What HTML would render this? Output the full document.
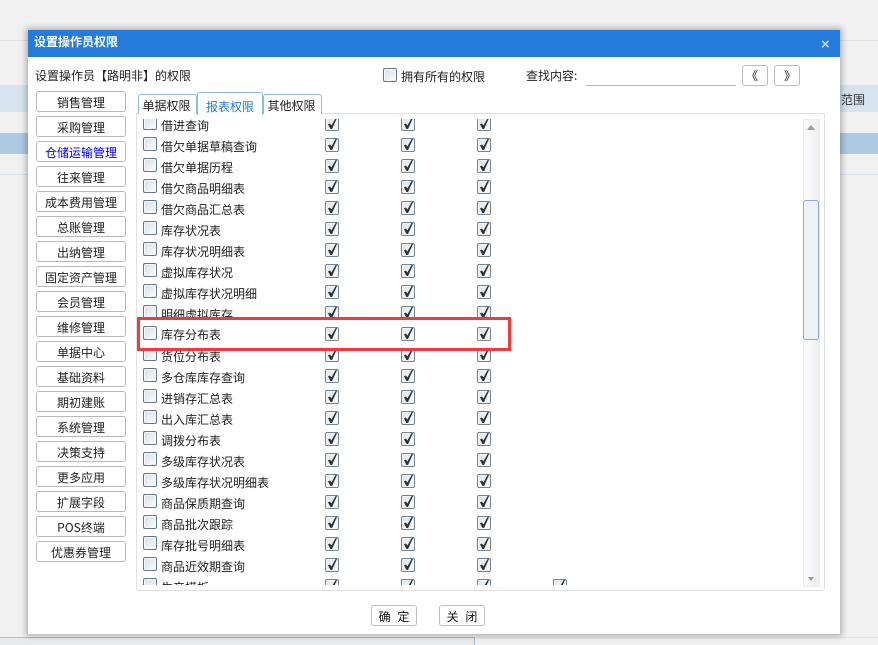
<!DOCTYPE html>
<html lang="zh">
<head>
<meta charset="utf-8">
<style>
html,body{margin:0;padding:0}
body{width:878px;height:645px;overflow:hidden;position:relative;background:#f1f1f1;font:12px/16px "WenQuanYi Zen Hei","Noto Sans CJK SC",sans-serif;color:#222}
.a{position:absolute}
#dlg{left:28px;top:30px;width:812px;height:604px;background:#fff;box-shadow:0 0 6px 2px rgba(0,0,0,.28)}
#hd{left:28px;top:30px;width:812px;height:27px;background:#247bdc;color:#fff;font-weight:bold;line-height:23px;text-indent:6px}
.b{position:absolute;left:36px;width:88px;height:19px;border:1px solid #b9b9b9;border-radius:3px;background:#fff;text-align:center;line-height:21px;white-space:nowrap}
.tab{position:absolute;border:1px solid #8fbcd4;border-bottom:0;border-radius:3px 3px 0 0;background:#fff;text-align:center;box-sizing:border-box;line-height:21px}
#panel{left:136px;top:113px;width:687px;height:476px;border:1px solid #e0e0e0;border-radius:0 0 3px 3px;background:#fff}
#list{left:136px;top:119px;width:660px;height:466px;overflow:hidden}
.r{position:absolute;left:0;width:660px;height:21px}
.r span{position:absolute;left:25px;top:0;line-height:18px;white-space:nowrap}
.c{position:absolute;left:7px;top:-1px;width:12px;height:12px;border:1px solid #64788a;border-radius:2px;background:linear-gradient(135deg,#d5dfea,#fdfdfe);box-shadow:inset 0 0 0 1px #f6f8fa;padding:0}
.k{position:absolute;top:0;width:12px;height:12px;border:1px solid #74838f;border-radius:2px;background:linear-gradient(135deg,#dfe4e9,#fbfbfc);box-shadow:inset 0 0 0 1px #f4f5f6}
.k::after{content:"";position:absolute;left:2px;top:0;width:9px;height:11px;background:#2f3033;clip-path:polygon(0 58%,22% 50%,38% 68%,85% 0,100% 0,45% 100%,28% 100%)}
.k1{left:189px}.k2{left:265px}.k3{left:341px}.k4{left:417px}
#hl{left:137px;top:317px;width:368px;height:28px;border:3px solid #f23a3a;background:#fff}
#hl .c{left:3px;top:6px}
#hl .k{top:7px}
#hl .k1{left:185px}#hl .k2{left:261px}#hl .k3{left:337px}
#hl span{position:absolute;left:21px;top:6px;line-height:18px}
#sb{left:803px;top:119px;width:15px;height:466px;border:1px solid #ededed;background:linear-gradient(90deg,#fbfbfc,#eeeff1)}
#th{left:803px;top:200px;width:14px;height:138px;border:1px solid #8fa8dc;border-radius:3px;background:#eff2f5}
.tu{width:0;height:0;border-left:4px solid transparent;border-right:4px solid transparent;border-bottom:5px solid #9a9a9a}
.td{width:0;height:0;border-left:3px solid transparent;border-right:3px solid transparent;border-top:4px solid #9a9a9a}
.s{position:absolute;width:24px;height:19px;border:1px solid #bdbdbd;border-radius:3px;background:#fff;text-align:center;line-height:20px;color:#111}
.f{position:absolute;height:19px;border:1px solid #bdbdbd;border-radius:3px;background:#fff;text-align:center;line-height:21px;color:#111;word-spacing:4px}
</style>
</head>
<body>
<div class="a" style="left:0;top:40px;width:28px;height:1px;background:#dfdfdf"></div>
<div class="a" style="left:840px;top:40px;width:38px;height:1px;background:#dfdfdf"></div>
<div class="a" style="left:0;top:85px;width:878px;height:27px;background:#d7e4ef"></div>
<div class="a" style="left:0;top:133px;width:878px;height:21px;background:#adc9e3"></div>
<div class="a" style="left:0;top:174px;width:878px;height:1px;background:#d7e4f2"></div>
<div class="a" style="left:840px;top:92px;line-height:16px;color:#333;white-space:nowrap;width:38px;overflow:hidden"><span style="margin-left:1px">范围</span></div>
<div class="a" style="left:0;top:637px;width:475px;height:8px;background:#e8eaec;border-top:1px solid #a9bcd8;border-right:1px solid #a9bcd8;box-sizing:border-box"></div>
<div class="a" style="left:475px;top:637px;width:403px;height:1px;background:#e4e4e4"></div>

<div class="a" id="dlg"></div>
<div class="a" id="hd">设置操作员权限</div>
<div class="a" style="left:821px;top:38px;color:#c6d4e6;font-size:15px;font-weight:bold;line-height:14px;font-family:'Liberation Sans',sans-serif">×</div>

<div class="a" style="left:35px;top:68px;white-space:nowrap">设置操作员【路明非】的权限</div>
<div class="a c" style="left:383px;top:68px"></div>
<div class="a" style="left:401px;top:69px;white-space:nowrap">拥有所有的权限</div>
<div class="a" style="left:526px;top:68px;white-space:nowrap">查找内容:</div>
<div class="a" style="left:586px;top:85px;width:150px;height:1px;background:#b5b5b5"></div>
<div class="s" style="left:742px;top:65px;text-indent:-6px">《</div>
<div class="s" style="left:774px;top:65px;text-indent:6px">》</div>

<div class="b" style="top:91px">销售管理</div>
<div class="b" style="top:116px">采购管理</div>
<div class="b" style="top:141px;color:#0000ee">仓储运输管理</div>
<div class="b" style="top:166px">往来管理</div>
<div class="b" style="top:191px">成本费用管理</div>
<div class="b" style="top:216px">总账管理</div>
<div class="b" style="top:241px">出纳管理</div>
<div class="b" style="top:266px">固定资产管理</div>
<div class="b" style="top:291px">会员管理</div>
<div class="b" style="top:316px">维修管理</div>
<div class="b" style="top:341px">单据中心</div>
<div class="b" style="top:366px">基础资料</div>
<div class="b" style="top:391px">期初建账</div>
<div class="b" style="top:416px">系统管理</div>
<div class="b" style="top:441px">决策支持</div>
<div class="b" style="top:466px">更多应用</div>
<div class="b" style="top:491px">扩展字段</div>
<div class="b" style="top:516px">POS终端</div>
<div class="b" style="top:541px">优惠券管理</div>

<div class="a" id="panel"></div>
<div class="tab" style="left:138px;top:94px;width:59px;height:20px;text-indent:-2px">单据权限</div>
<div class="tab" style="left:197px;top:92px;width:66px;height:23px;color:#1f7fd0;line-height:28px;z-index:2">报表权限</div>
<div class="tab" style="left:263px;top:94px;width:59px;height:20px;text-indent:-2px">其他权限</div>

<div class="a" id="list">
<div class="r" style="top:-2px"><i class="c"></i><span>借进查询</span><i class="k k1"></i><i class="k k2"></i><i class="k k3"></i></div>
<div class="r" style="top:19px"><i class="c"></i><span>借欠单据草稿查询</span><i class="k k1"></i><i class="k k2"></i><i class="k k3"></i></div>
<div class="r" style="top:40px"><i class="c"></i><span>借欠单据历程</span><i class="k k1"></i><i class="k k2"></i><i class="k k3"></i></div>
<div class="r" style="top:61px"><i class="c"></i><span>借欠商品明细表</span><i class="k k1"></i><i class="k k2"></i><i class="k k3"></i></div>
<div class="r" style="top:82px"><i class="c"></i><span>借欠商品汇总表</span><i class="k k1"></i><i class="k k2"></i><i class="k k3"></i></div>
<div class="r" style="top:103px"><i class="c"></i><span>库存状况表</span><i class="k k1"></i><i class="k k2"></i><i class="k k3"></i></div>
<div class="r" style="top:124px"><i class="c"></i><span>库存状况明细表</span><i class="k k1"></i><i class="k k2"></i><i class="k k3"></i></div>
<div class="r" style="top:145px"><i class="c"></i><span>虚拟库存状况</span><i class="k k1"></i><i class="k k2"></i><i class="k k3"></i></div>
<div class="r" style="top:166px"><i class="c"></i><span>虚拟库存状况明细</span><i class="k k1"></i><i class="k k2"></i><i class="k k3"></i></div>
<div class="r" style="top:187px"><i class="c"></i><span>明细虚拟库存</span><i class="k k1"></i><i class="k k2"></i><i class="k k3"></i></div>
<div class="r" style="top:229px"><i class="c"></i><span>货位分布表</span><i class="k k1"></i><i class="k k2"></i><i class="k k3"></i></div>
<div class="r" style="top:250px"><i class="c"></i><span>多仓库库存查询</span><i class="k k1"></i><i class="k k2"></i><i class="k k3"></i></div>
<div class="r" style="top:271px"><i class="c"></i><span>进销存汇总表</span><i class="k k1"></i><i class="k k2"></i><i class="k k3"></i></div>
<div class="r" style="top:292px"><i class="c"></i><span>出入库汇总表</span><i class="k k1"></i><i class="k k2"></i><i class="k k3"></i></div>
<div class="r" style="top:313px"><i class="c"></i><span>调拨分布表</span><i class="k k1"></i><i class="k k2"></i><i class="k k3"></i></div>
<div class="r" style="top:334px"><i class="c"></i><span>多级库存状况表</span><i class="k k1"></i><i class="k k2"></i><i class="k k3"></i></div>
<div class="r" style="top:355px"><i class="c"></i><span>多级库存状况明细表</span><i class="k k1"></i><i class="k k2"></i><i class="k k3"></i></div>
<div class="r" style="top:376px"><i class="c"></i><span>商品保质期查询</span><i class="k k1"></i><i class="k k2"></i><i class="k k3"></i></div>
<div class="r" style="top:397px"><i class="c"></i><span>商品批次跟踪</span><i class="k k1"></i><i class="k k2"></i><i class="k k3"></i></div>
<div class="r" style="top:418px"><i class="c"></i><span>库存批号明细表</span><i class="k k1"></i><i class="k k2"></i><i class="k k3"></i></div>
<div class="r" style="top:439px"><i class="c"></i><span>商品近效期查询</span><i class="k k1"></i><i class="k k2"></i><i class="k k3"></i></div>
<div class="r" style="top:460px"><i class="c"></i><span>生产模板</span><i class="k k1"></i><i class="k k2"></i><i class="k k3"></i><i class="k k4"></i></div>
</div>

<div class="a" id="hl"><i class="c"></i><span>库存分布表</span><i class="k k1"></i><i class="k k2"></i><i class="k k3"></i></div>

<div class="a" id="sb"></div>
<div class="a tu" style="left:807px;top:125px"></div>
<div class="a td" style="left:808px;top:577px"></div>
<div class="a" id="th"></div>

<div class="f" style="left:371px;top:605px;width:44px">确 定</div>
<div class="f" style="left:439px;top:605px;width:44px">关 闭</div>
</body>
</html>
